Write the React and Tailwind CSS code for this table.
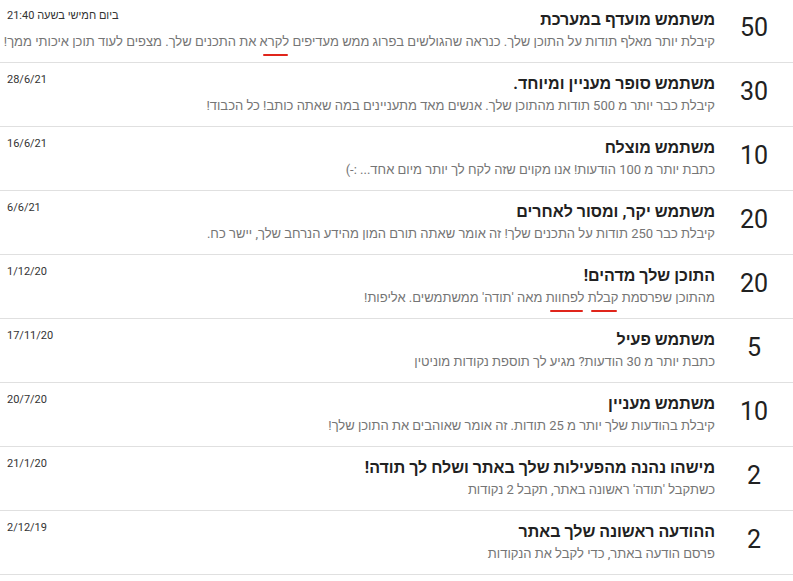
import React from "react";

const items = [
  {
    points: 50,
    title: "משתמש מועדף במערכת",
    date: "ביום חמישי בשעה 21:40",
    desc: (
      <>
        קיבלת יותר מאלף תודות על התוכן שלך. כנראה שהגולשים בפרוג ממש מעדיפים{" "}
        <Squiggle>לקרא</Squiggle> את התכנים שלך. מצפים לעוד תוכן איכותי ממך!
      </>
    ),
  },
  {
    points: 30,
    title: "משתמש סופר מעניין ומיוחד.",
    date: "28/6/21",
    desc: "קיבלת כבר יותר מ 500 תודות מהתוכן שלך. אנשים מאד מתעניינים במה שאתה כותב! כל הכבוד!",
  },
  {
    points: 10,
    title: "משתמש מוצלח",
    date: "16/6/21",
    desc: "כתבת יותר מ 100 הודעות! אנו מקוים שזה לקח לך יותר מיום אחד... :-)",
  },
  {
    points: 20,
    title: "משתמש יקר, ומסור לאחרים",
    date: "6/6/21",
    desc: "קיבלת כבר 250 תודות על התכנים שלך! זה אומר שאתה תורם המון מהידע הנרחב שלך, יישר כח.",
  },
  {
    points: 20,
    title: "התוכן שלך מדהים!",
    date: "1/12/20",
    desc: (
      <>
        מהתוכן שפרסמת <Squiggle>קבלת</Squiggle> <Squiggle>לפחוות</Squiggle> מאה 'תודה' ממשתמשים. אליפות!
      </>
    ),
  },
  {
    points: 5,
    title: "משתמש פעיל",
    date: "17/11/20",
    desc: "כתבת יותר מ 30 הודעות? מגיע לך תוספת נקודות מוניטין",
  },
  {
    points: 10,
    title: "משתמש מעניין",
    date: "20/7/20",
    desc: "קיבלת בהודעות שלך יותר מ 25 תודות. זה אומר שאוהבים את התוכן שלך!",
  },
  {
    points: 2,
    title: "מישהו נהנה מהפעילות שלך באתר ושלח לך תודה!",
    date: "21/1/20",
    desc: "כשתקבל 'תודה' ראשונה באתר, תקבל 2 נקודות",
  },
  {
    points: 2,
    title: "ההודעה ראשונה שלך באתר",
    date: "2/12/19",
    desc: "פרסם הודעה באתר, כדי לקבל את הנקודות",
  },
];

function Squiggle({ children }) {
  return (
    <span className="relative inline-block">
      {children}
      <span className="absolute left-[10%] right-[5%] -bottom-[4px] h-[2px] rounded-full bg-[#e0251b]" />
    </span>
  );
}

function Row({ item, first }) {
  return (
    <div
      className={`flex h-[64px] border-b border-[#e0e0e0] ${first ? "-mt-[1px]" : ""}`}
    >
      <div className="w-[78px] shrink-0 flex items-center justify-center pb-[6px] text-[25px] text-[#212121]">
        {item.points}
      </div>
      <div className="flex-1 min-w-0 pt-[9px]">
        <div className="text-[16px] leading-[24px] font-bold text-[#212121]">
          {item.title}
        </div>
        <div className="text-[13px] leading-[20px] text-[#757575] whitespace-nowrap">
          {item.desc}
        </div>
      </div>
      <div className="shrink-0 pl-[7px] pt-[10px] text-[11px] leading-[14px] text-[#333333] whitespace-nowrap">
        {item.date}
      </div>
    </div>
  );
}

export default function App() {
  return (
    <div
      dir="rtl"
      className="w-[793px] h-[581px] overflow-hidden bg-white"
      style={{ fontFamily: "Roboto, 'Liberation Sans', Arial, sans-serif" }}
    >
      {items.map((item, i) => (
        <Row key={i} item={item} first={i === 0} />
      ))}
    </div>
  );
}
